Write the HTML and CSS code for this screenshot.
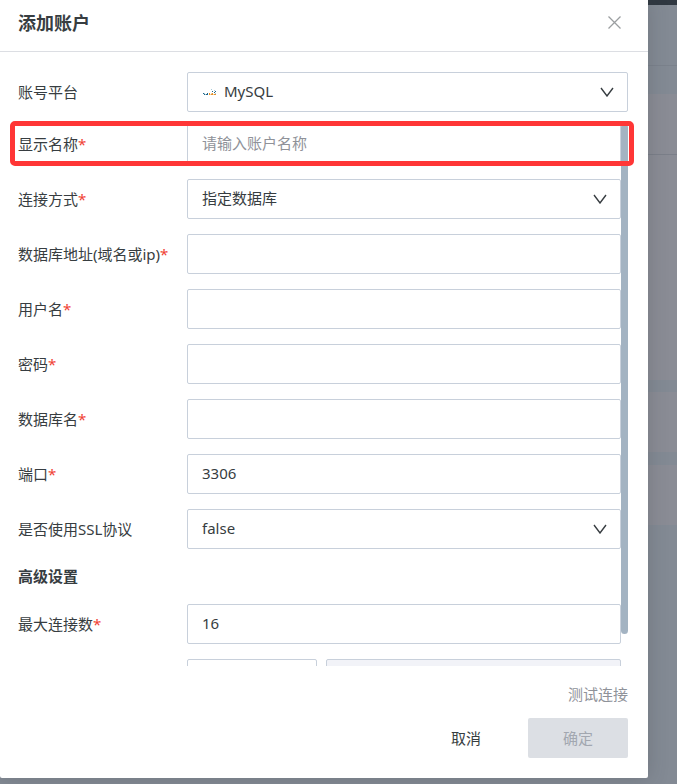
FILE: index.html
```html
<!DOCTYPE html>
<html lang="zh-CN">
<head>
    <meta charset="UTF-8">
    <meta name="viewport" content="width=device-width, initial-scale=1.0">
    <title>添加账户</title>
    <link rel="stylesheet" href="styles.css">
</head>
<body>
    <!-- dimmed page behind the dialog -->
    <div class="backdrop" aria-hidden="true">
        <div class="topbar"></div>
        <div class="toolbar"></div>
        <div class="panel panel-head"></div>
        <div class="panel panel-large"></div>
        <div class="panel"></div>
        <div class="panel"></div>
    </div>

    <form class="dialog" role="dialog" aria-labelledby="dialogTitle">
        <header class="dialog-header">
            <h2 id="dialogTitle">添加账户</h2>
            <button type="button" class="close" aria-label="关闭">
                <svg width="13" height="13" viewBox="0 0 13 13"><path d="M0.5 0.5L12.5 12.5M12.5 0.5L0.5 12.5" /></svg>
            </button>
        </header>

        <div class="row platform">
            <label for="platform">账号平台</label>
            <div class="select has-logo">
                <svg class="logo" width="14" height="8" viewBox="0 0 14 8" shape-rendering="crispEdges">
                    <path fill="#1d6488" d="M0 4h1v1h-1zM1 5h1v1h-1zM3 5h2v1h-2zM4 4h1v1h-1zM9 2h1v1h-1zM12 2h1v1h-1zM11 3h1v1h-1z" />
                    <path fill="#a9cbd9" d="M1 4h1v1h-1zM2 5h1v1h-1zM8 0h1v1h-1zM11 1h1v1h-1zM12 4h1v1h-1z" />
                    <path fill="#e5922c" d="M6 4h1v2h-1zM8 5h2v1h-2zM9 4h1v1h-1zM11 5h2v1h-2z" />
                    <path fill="#f4d6a8" d="M7 5h1v1h-1zM10 5h1v1h-1zM8 4h1v1h-1z" />
                </svg>
                <select id="platform" name="platform">
                    <option>MySQL</option>
                </select>
                <svg class="arrow" width="14" height="10" viewBox="0 0 14 10"><path d="M1 1L7 9L13 1" /></svg>
            </div>
        </div>

        <div class="scroll-wrap">
            <div class="fields">
                <div class="row">
                    <label for="displayName">显示名称<span class="required">*</span></label>
                    <input type="text" id="displayName" name="displayName" placeholder="请输入账户名称">
                </div>
                <div class="row">
                    <label for="connectType">连接方式<span class="required">*</span></label>
                    <div class="select">
                        <select id="connectType" name="connectType">
                            <option>指定数据库</option>
                        </select>
                        <svg class="arrow" width="14" height="10" viewBox="0 0 14 10"><path d="M1 1L7 9L13 1" /></svg>
                    </div>
                </div>
                <div class="row">
                    <label for="host">数据库地址(域名或ip)<span class="required">*</span></label>
                    <input type="text" id="host" name="host">
                </div>
                <div class="row">
                    <label for="username">用户名<span class="required">*</span></label>
                    <input type="text" id="username" name="username">
                </div>
                <div class="row">
                    <label for="password">密码<span class="required">*</span></label>
                    <input type="password" id="password" name="password">
                </div>
                <div class="row">
                    <label for="database">数据库名<span class="required">*</span></label>
                    <input type="text" id="database" name="database">
                </div>
                <div class="row">
                    <label for="port">端口<span class="required">*</span></label>
                    <input type="text" id="port" name="port" value="3306">
                </div>
                <div class="row">
                    <label for="ssl">是否使用SSL协议</label>
                    <div class="select">
                        <select id="ssl" name="ssl">
                            <option>false</option>
                        </select>
                        <svg class="arrow" width="14" height="10" viewBox="0 0 14 10"><path d="M1 1L7 9L13 1" /></svg>
                    </div>
                </div>
                <h3>高级设置</h3>
                <div class="row">
                    <label for="maxConnections">最大连接数<span class="required">*</span></label>
                    <input type="text" id="maxConnections" name="maxConnections" value="16">
                </div>
                <div class="row">
                    <span></span>
                    <div class="pair">
                        <input type="text" name="optionKey" aria-label="key">
                        <input type="text" name="optionValue" aria-label="value" disabled>
                    </div>
                </div>
            </div>
            <div class="scroll-thumb"></div>
            <div class="highlight"></div>
        </div>

        <footer class="dialog-footer">
            <a href="#" class="test-link">测试连接</a>
            <div class="actions">
                <button type="button" class="btn">取消</button>
                <button type="submit" class="btn btn-primary" disabled>确定</button>
            </div>
        </footer>
    </form>
</body>
</html>
```
FILE: styles.css
```css
* {
    box-sizing: border-box;
}
body {
    margin: 0;
    height: 100vh;
    overflow: hidden;
    background-color: #838a94;
    color: #373d41;
    font-family: "Noto Sans", "Noto Sans CJK SC", sans-serif;
    font-size: 15px;
    line-height: 24px;
}

/* page behind */
.backdrop {
    position: absolute;
    inset: 0;
}
.topbar {
    height: 5px;
    background-color: #303841;
}
.toolbar {
    height: 61px;
    margin-bottom: 28px;
    border-bottom: 1px solid #7b828c;
}
.panel {
    height: 60px;
    margin-bottom: 13px;
    background-color: #8a8c95;
}
.panel-head {
    height: 61px;
    margin-bottom: 0;
    border-bottom: 1px solid #7b7f89;
}
.panel-large {
    height: 225px;
    margin-bottom: 12px;
}

/* dialog */
.dialog {
    position: relative;
    display: flex;
    flex-direction: column;
    height: calc(100vh - 6px);
    margin-right: 29px;
    background-color: #fff;
    border-radius: 0 0 2px 2px;
    box-shadow: 0 0 20px rgba(55, 61, 65, 0.25);
}
.dialog-header {
    display: flex;
    align-items: center;
    justify-content: space-between;
    height: 52px;
    padding: 0 20px 6px 18px;
    border-bottom: 1px solid #dcdee3;
}
h2,
h3 {
    margin: 0;
    font-weight: bold;
}
h2 {
    font-size: 18px;
}
h3 {
    font-size: 15px;
    line-height: 25px;
}
.close {
    display: flex;
    padding: 7px;
    border: none;
    background: none;
    cursor: pointer;
}
.close path {
    fill: none;
    stroke: #9b9ea0;
    stroke-width: 1.3;
}

/* form rows */
.row {
    display: grid;
    grid-template-columns: 169px 1fr;
    align-items: center;
    height: 40px;
}
.platform {
    margin: 20px 20px 12px 18px;
}
.required {
    color: #f04134;
}
input,
select {
    width: 100%;
    height: 40px;
    padding: 0 14px 2px;
    border: 1px solid #c8d0db;
    border-radius: 2px;
    background-color: #fff;
    color: #373d41;
    font: inherit;
}
input::placeholder {
    color: #8f9299;
    opacity: 1;
}
input:disabled {
    background-color: #f2f3f8;
}
.select {
    position: relative;
}
.select select {
    display: block;
    appearance: none;
}
.arrow {
    position: absolute;
    top: 15px;
    right: 14px;
    pointer-events: none;
}
.arrow path {
    fill: none;
    stroke: #373d41;
    stroke-width: 1.4;
}
.has-logo select {
    padding-left: 36px;
}
.logo {
    position: absolute;
    top: 17px;
    left: 16px;
}
.pair {
    display: grid;
    grid-template-columns: 130px 1fr;
    gap: 9px;
}

/* scrolling part */
.scroll-wrap {
    position: relative;
    flex: 1;
    min-height: 0;
    margin: 0 20px 0 18px;
}
.fields {
    display: flex;
    flex-direction: column;
    gap: 15px;
    height: 100%;
    padding-right: 7px;
    overflow: hidden;
}
.fields > * {
    flex-shrink: 0;
}
.scroll-thumb {
    position: absolute;
    top: 0;
    right: 0;
    width: 7px;
    height: 510px;
    border-radius: 4px;
    background-color: #a3b3c2;
}
.highlight {
    position: absolute;
    top: -3px;
    left: -8px;
    right: -6px;
    height: 45px;
    border: 5px solid #ff3636;
    border-radius: 5px;
    pointer-events: none;
}

/* footer */
.dialog-footer {
    display: flex;
    flex-direction: column;
    gap: 12px;
    padding: 16px 20px 20px;
}
.test-link {
    align-self: flex-end;
    color: #8f9299;
    text-decoration: none;
}
.actions {
    display: flex;
    justify-content: flex-end;
    gap: 12px;
}
.btn {
    width: 100px;
    height: 40px;
    border: none;
    border-radius: 2px;
    background-color: #fff;
    color: #373d41;
    font: inherit;
    cursor: pointer;
}
.btn-primary:disabled {
    background-color: #dcdfe4;
    color: #a2a7b0;
    cursor: default;
}
```
